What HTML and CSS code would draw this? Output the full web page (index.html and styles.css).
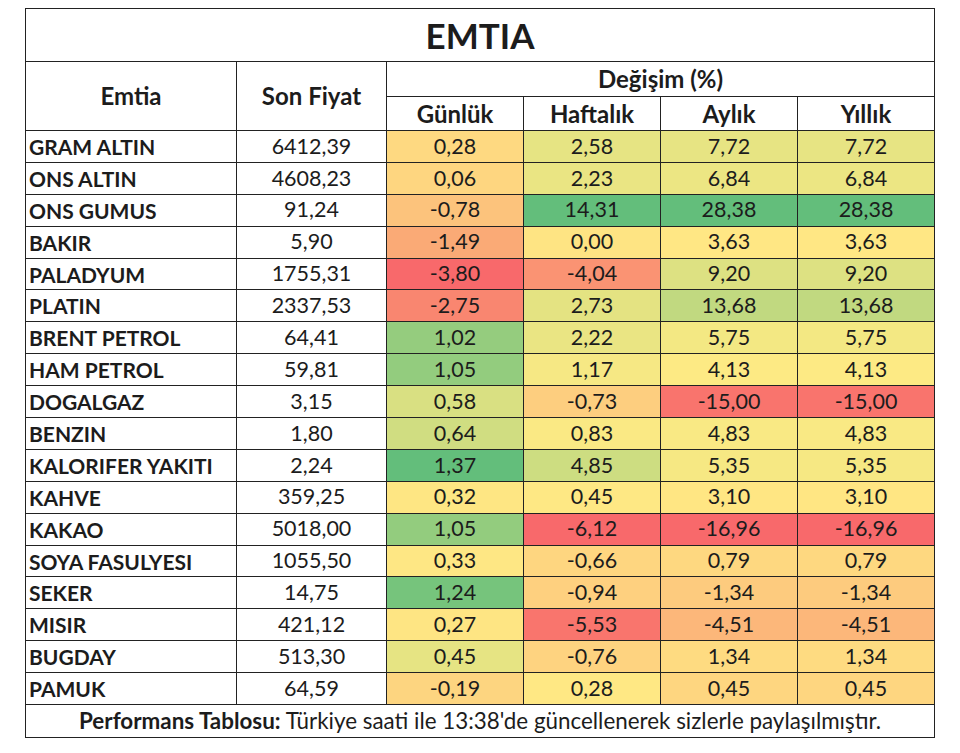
FILE: index.html
```html
<!DOCTYPE html>
<html lang="tr">
<head>
<meta charset="utf-8">
<title>EMTIA</title>
<link rel="stylesheet" href="styles.css">
</head>
<body>
<div class="page">
<table class="perf">
  <colgroup>
    <col class="c-name"><col class="c-price"><col class="c-pct"><col class="c-pct"><col class="c-pct"><col class="c-pct">
  </colgroup>
  <thead>
    <tr class="title-row"><th colspan="6" class="title">EMTIA</th></tr>
    <tr class="head1">
      <th rowspan="2" class="hcell">Emtia</th>
      <th rowspan="2" class="hcell">Son Fiyat</th>
      <th colspan="4" class="hcell">Değişim (%)</th>
    </tr>
    <tr class="head2">
      <th class="hcell">Günlük</th>
      <th class="hcell">Haftalık</th>
      <th class="hcell">Aylık</th>
      <th class="hcell">Yıllık</th>
    </tr>
  </thead>
  <tbody>
    <tr><td class="name">GRAM ALTIN</td><td class="num">6412,39</td><td class="num" style="background:#FED981">0,28</td><td class="num" style="background:#E6E483">2,58</td><td class="num" style="background:#E7E483">7,72</td><td class="num" style="background:#E7E483">7,72</td></tr>
    <tr><td class="name">ONS ALTIN</td><td class="num">4608,23</td><td class="num" style="background:#FED680">0,06</td><td class="num" style="background:#EAE583">2,23</td><td class="num" style="background:#ECE683">6,84</td><td class="num" style="background:#ECE683">6,84</td></tr>
    <tr><td class="name">ONS GUMUS</td><td class="num">91,24</td><td class="num" style="background:#FCC37C">-0,78</td><td class="num" style="background:#63BE7B">14,31</td><td class="num" style="background:#63BE7B">28,38</td><td class="num" style="background:#63BE7B">28,38</td></tr>
    <tr><td class="name">BAKIR</td><td class="num">5,90</td><td class="num" style="background:#FAAA76">-1,49</td><td class="num" style="background:#FEE483">0,00</td><td class="num" style="background:#FFE784">3,63</td><td class="num" style="background:#FFE784">3,63</td></tr>
    <tr><td class="name">PALADYUM</td><td class="num">1755,31</td><td class="num" style="background:#F8696B">-3,80</td><td class="num" style="background:#FA9373">-4,04</td><td class="num" style="background:#DDE182">9,20</td><td class="num" style="background:#DDE182">9,20</td></tr>
    <tr><td class="name">PLATIN</td><td class="num">2337,53</td><td class="num" style="background:#F98670">-2,75</td><td class="num" style="background:#E4E382">2,73</td><td class="num" style="background:#C1D980">13,68</td><td class="num" style="background:#C1D980">13,68</td></tr>
    <tr><td class="name">BRENT PETROL</td><td class="num">64,41</td><td class="num" style="background:#95CC7E">1,02</td><td class="num" style="background:#EAE583">2,22</td><td class="num" style="background:#F3E883">5,75</td><td class="num" style="background:#F3E883">5,75</td></tr>
    <tr><td class="name">HAM PETROL</td><td class="num">59,81</td><td class="num" style="background:#93CC7E">1,05</td><td class="num" style="background:#F6E884">1,17</td><td class="num" style="background:#FDEA84">4,13</td><td class="num" style="background:#FDEA84">4,13</td></tr>
    <tr><td class="name">DOGALGAZ</td><td class="num">3,15</td><td class="num" style="background:#D9E082">0,58</td><td class="num" style="background:#FDCE7F">-0,73</td><td class="num" style="background:#F9746D">-15,00</td><td class="num" style="background:#F9746D">-15,00</td></tr>
    <tr><td class="name">BENZIN</td><td class="num">1,80</td><td class="num" style="background:#D0DD81">0,64</td><td class="num" style="background:#FAE984">0,83</td><td class="num" style="background:#F9E984">4,83</td><td class="num" style="background:#F9E984">4,83</td></tr>
    <tr><td class="name">KALORIFER YAKITI</td><td class="num">2,24</td><td class="num" style="background:#63BE7B">1,37</td><td class="num" style="background:#CDDD81">4,85</td><td class="num" style="background:#F6E883">5,35</td><td class="num" style="background:#F6E883">5,35</td></tr>
    <tr><td class="name">KAHVE</td><td class="num">359,25</td><td class="num" style="background:#FEE683">0,32</td><td class="num" style="background:#FEE884">0,45</td><td class="num" style="background:#FFE683">3,10</td><td class="num" style="background:#FFE683">3,10</td></tr>
    <tr><td class="name">KAKAO</td><td class="num">5018,00</td><td class="num" style="background:#93CC7E">1,05</td><td class="num" style="background:#F8696B">-6,12</td><td class="num" style="background:#F8696B">-16,96</td><td class="num" style="background:#F8696B">-16,96</td></tr>
    <tr><td class="name">SOYA FASULYESI</td><td class="num">1055,50</td><td class="num" style="background:#FEE784">0,33</td><td class="num" style="background:#FED680">-0,66</td><td class="num" style="background:#FED880">0,79</td><td class="num" style="background:#FED880">0,79</td></tr>
    <tr><td class="name">SEKER</td><td class="num">14,75</td><td class="num" style="background:#76C47C">1,24</td><td class="num" style="background:#FED07F">-0,94</td><td class="num" style="background:#FDCB7E">-1,34</td><td class="num" style="background:#FDCB7E">-1,34</td></tr>
    <tr><td class="name">MISIR</td><td class="num">421,12</td><td class="num" style="background:#FEE583">0,27</td><td class="num" style="background:#F9756D">-5,53</td><td class="num" style="background:#FCB77A">-4,51</td><td class="num" style="background:#FCB77A">-4,51</td></tr>
    <tr><td class="name">BUGDAY</td><td class="num">513,30</td><td class="num" style="background:#E6E483">0,45</td><td class="num" style="background:#FED380">-0,76</td><td class="num" style="background:#FEDB81">1,34</td><td class="num" style="background:#FEDB81">1,34</td></tr>
    <tr><td class="name">PAMUK</td><td class="num">64,59</td><td class="num" style="background:#FDD580">-0,19</td><td class="num" style="background:#FFE884">0,28</td><td class="num" style="background:#FED680">0,45</td><td class="num" style="background:#FED680">0,45</td></tr>
  </tbody>
  <tfoot>
    <tr class="foot-row"><td colspan="6" class="foot"><strong>Performans Tablosu:</strong> Türkiye saati ile 13:38'de güncellenerek sizlerle paylaşılmıştır.</td></tr>
  </tfoot>
</table>
</div>
</body>
</html>
```
FILE: styles.css
```css
html, body {
  margin: 0;
  padding: 0;
  background: #ffffff;
}

.page {
  padding: 8px 0 0 25px;
}

.perf {
  border-collapse: collapse;
  width: 910px;
  table-layout: fixed;
  font-family: Lato, "Open Sans", "Liberation Sans", sans-serif;
  color: #1c1c1c;
}

.c-name { width: 211px; }
.c-price { width: 150px; }
.c-pct { width: 137px; }

.perf th,
.perf td {
  border: 1px solid #222222;
  padding: 0;
  vertical-align: middle;
  line-height: 1;
}

.title-row { height: 53px; }
.title {
  font-size: 35px;
  font-weight: 700;
  text-align: center;
}

.head1 { height: 35px; }
.head2 { height: 34px; }
.hcell {
  font-size: 24px;
  font-weight: 700;
  text-align: center;
}

.perf tbody tr { height: 31.9px; }

.name {
  font-size: 21px;
  font-weight: 700;
  text-align: left;
  padding-left: 3px !important;
  white-space: nowrap;
}

.num {
  font-size: 21.5px;
  font-weight: 400;
  text-align: center;
}

.foot-row { height: 33px; }
.foot {
  font-size: 22.4px;
  text-align: center;
  white-space: nowrap;
}
.foot strong { font-weight: 700; }
```
